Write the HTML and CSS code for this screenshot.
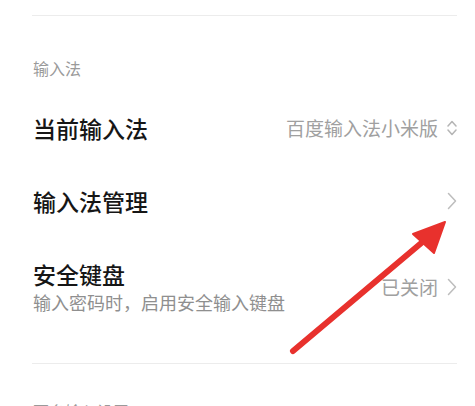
FILE: index.html
```html
<!DOCTYPE html>
<html lang="zh-CN">
<head>
<meta charset="utf-8">
<title>输入法设置</title>
<link rel="stylesheet" href="styles.css">
</head>
<body>
<div class="page">
  <div class="divider top"></div>
  <div class="section-label">输入法</div>

  <div class="row first">
    <div class="row-title">当前输入法</div>
    <div class="row-right">
      <span class="row-value">百度输入法小米版</span>
      <svg class="updown" width="10" height="18" viewBox="0 0 10 18"><path d="M1 7 L5 2.5 L9 7 M1 11 L5 15.5 L9 11" fill="none" stroke="#b5b5b5" stroke-width="1.5" stroke-linecap="round" stroke-linejoin="round"/></svg>
    </div>
  </div>

  <div class="row">
    <div class="row-title">输入法管理</div>
    <div class="row-right">
      <svg class="chev" width="10" height="18" viewBox="0 0 10 18"><path d="M1.5 1.5 L8.5 9 L1.5 16.5" fill="none" stroke="#bdbdbd" stroke-width="1.5" stroke-linecap="round" stroke-linejoin="round"/></svg>
    </div>
  </div>

  <div class="row tall">
    <div class="row-text">
      <div class="row-title">安全键盘</div>
      <div class="row-sub">输入密码时，启用安全输入键盘</div>
    </div>
    <div class="row-right">
      <span class="row-value">已关闭</span>
      <svg class="chev" width="10" height="18" viewBox="0 0 10 18"><path d="M1.5 1.5 L8.5 9 L1.5 16.5" fill="none" stroke="#bdbdbd" stroke-width="1.5" stroke-linecap="round" stroke-linejoin="round"/></svg>
    </div>
  </div>

  <div class="divider bottom"></div>
  <div class="section-label next">更多输入设置</div>

  <svg class="annotation" width="475" height="406" viewBox="0 0 475 406">
    <line x1="293" y1="336" x2="432" y2="219" stroke="#e8312d" stroke-width="6" stroke-linecap="round"/>
    <polygon points="445,207 413,219 434,238" fill="#e8312d" stroke="#e8312d" stroke-width="2" stroke-linejoin="round"/>
  </svg>
</div>
</body>
</html>
```

FILE: styles.css
```css
html, body {
  margin: 0;
  padding: 0;
  background: #ffffff;
}

body {
  width: 475px;
  height: 406px;
  overflow: hidden;
  font-family: "Noto Sans CJK SC", "Noto Sans", sans-serif;
}

.page {
  position: relative;
  padding: 0 18px 0 32px;
  height: 406px;
  box-sizing: border-box;
}

.divider {
  height: 1px;
  background: #ececec;
}

.divider.top {
  margin-top: 15px;
}

.divider.bottom {
  margin-top: 26px;
}

.section-label {
  margin-top: 42px;
  padding-left: 1px;
  font-size: 16px;
  line-height: 20px;
  color: #9a9a9a;
}

.section-label.next {
  margin-top: 37px;
}

.row {
  display: flex;
  align-items: center;
  justify-content: space-between;
  height: 73px;
}

.row.first {
  margin-top: 13px;
}

.row.tall {
  height: 100px;
}

.row-title {
  font-size: 23px;
  line-height: 28px;
  font-weight: 500;
  color: #161616;
  padding-left: 1px;
}

.row-sub {
  font-size: 18px;
  line-height: 28px;
  color: #8f8f8f;
  padding-left: 1px;
}

.row-text {
  display: flex;
  flex-direction: column;
  padding-top: 2px;
}

.row-right {
  display: flex;
  align-items: center;
  gap: 9px;
}

.row-value {
  font-size: 19px;
  line-height: 24px;
  color: #a0a0a0;
}

.updown, .chev {
  display: block;
}

.annotation {
  position: absolute;
  left: 0;
  top: 0;
  pointer-events: none;
}
```
